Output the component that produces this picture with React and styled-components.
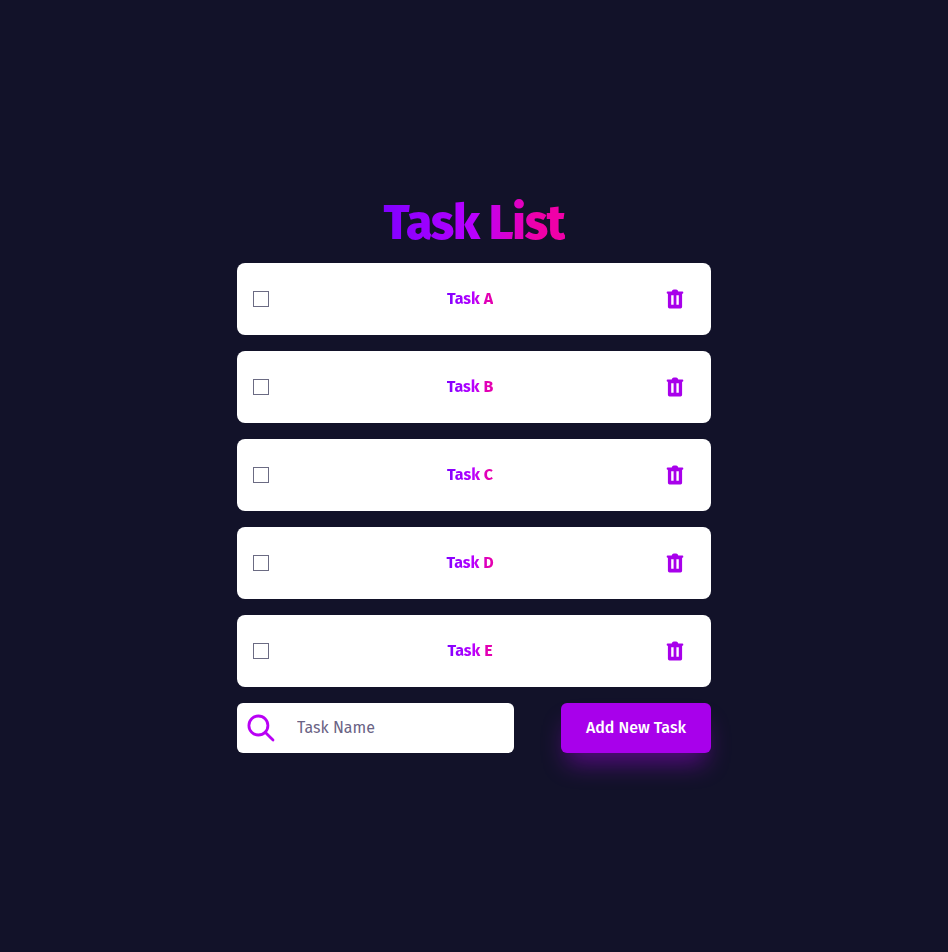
import React, { useState } from 'react';
import styled, { createGlobalStyle, css } from 'styled-components';

const GlobalStyle = createGlobalStyle`
  * { box-sizing: border-box; }
  body {
    margin: 0;
    background: #121229;
    font-family: 'Fira Sans', 'Noto Sans', sans-serif;
  }
`;

const gradientText = css`
  background: linear-gradient(90deg, #8000ff 0%, #b900ff 50%, #f000a8 85%, #f000a8 100%);
  -webkit-background-clip: text;
  background-clip: text;
  color: transparent;
`;

const Page = styled.main`
  min-height: 100vh;
  display: flex;
  justify-content: center;
  align-items: flex-start;
  padding-top: 193px;
`;

const Column = styled.section`
  width: 474px;
  display: flex;
  flex-direction: column;
  align-items: center;
`;

const Title = styled.h1`
  ${gradientText}
  margin: 0 0 10px;
  font-size: 48px;
  font-weight: 800;
  line-height: 60px;
  letter-spacing: -1.2px;
  white-space: nowrap;
`;

const List = styled.ul`
  width: 100%;
  margin: 0 0 16px;
  padding: 0;
  list-style: none;
  display: flex;
  flex-direction: column;
  gap: 16px;
`;

const Row = styled.li`
  height: 72px;
  padding: 0 27px 0 16px;
  border-radius: 8px;
  background: #fff;
  display: flex;
  align-items: center;
  justify-content: space-between;
`;

const Checkbox = styled.input`
  appearance: none;
  width: 16px;
  height: 16px;
  margin: 0;
  border: 1px solid #6b6b83;
  background: ${(p) => (p.checked ? '#a800eb' : '#fff')};
`;

const TaskName = styled.span`
  ${gradientText}
  background-image: linear-gradient(90deg, #8000ff 0%, #b900ff 58%, #e400b0 88%);
  font-size: 16px;
  font-weight: 700;
  line-height: 24px;
  margin-left: 5px;
`;

const IconButton = styled.button`
  display: flex;
  padding: 0;
  border: 0;
  background: none;
  color: #a800eb;
`;

const Form = styled.form`
  width: 100%;
  display: flex;
  justify-content: space-between;
`;

const Field = styled.label`
  width: 277px;
  height: 50px;
  padding-left: 10px;
  border-radius: 6px;
  background: #fff;
  display: flex;
  align-items: center;
  gap: 22px;
`;

const Input = styled.input`
  flex: 1;
  min-width: 0;
  padding: 0;
  border: 0;
  outline: 0;
  background: transparent;
  color: #6a6384;
  font: 400 16px/24px 'Fira Sans', 'Noto Sans', sans-serif;
  &::placeholder { color: #6a6384; opacity: 1; }
`;

const AddButton = styled.button`
  width: 150px;
  height: 50px;
  padding: 0;
  border: 0;
  border-radius: 6px;
  background: #a800eb;
  box-shadow: 0 16px 24px -6px rgba(168, 0, 235, 0.45);
  color: #fff;
  font: 500 16px/24px 'Fira Sans', 'Noto Sans', sans-serif;
  white-space: nowrap;
`;

const TrashIcon = () => (
  <svg width="18" height="20" viewBox="0 0 18 20" fill="currentColor">
    <path
      fillRule="evenodd"
      d="M5.7 2.5C6.1 1.1 6.9.4 7.8.4h2.4c.9 0 1.7.7 2.1 2.1h4.1a.9.9 0 0 1 .9.9v.4a.9.9 0 0 1-.9.9h-.3v13.1a1.6 1.6 0 0 1-1.6 1.6h-11a1.6 1.6 0 0 1-1.6-1.6V4.7h-.3a.9.9 0 0 1-.9-.9v-.4a.9.9 0 0 1 .9-.9ZM5.2 6.3v9.5h2.4V6.3Zm5.2 0v9.5h2.4V6.3Z"
    />
  </svg>
);

const SearchIcon = () => (
  <svg width="28" height="28" viewBox="0 0 28 28" fill="none" stroke="#b900f5" strokeWidth="2.8" strokeLinecap="round">
    <circle cx="11.4" cy="11.5" r="9.5" />
    <path d="M18.2 18.3 26 26" />
  </svg>
);

export default function App() {
  const [tasks, setTasks] = useState(['A', 'B', 'C', 'D', 'E'].map((id) => ({ id, name: `Task ${id}`, done: false })));
  const [name, setName] = useState('');

  const toggle = (id) => setTasks(tasks.map((t) => (t.id === id ? { ...t, done: !t.done } : t)));
  const remove = (id) => setTasks(tasks.filter((t) => t.id !== id));
  const add = (event) => {
    event.preventDefault();
    if (!name.trim()) return;
    setTasks([...tasks, { id: String(Date.now()), name, done: false }]);
    setName('');
  };

  return (
    <Page>
      <GlobalStyle />
      <Column>
        <Title>Task List</Title>
        <List>
          {tasks.map((task) => (
            <Row key={task.id}>
              <Checkbox type="checkbox" checked={task.done} onChange={() => toggle(task.id)} />
              <TaskName>{task.name}</TaskName>
              <IconButton aria-label="Delete task" onClick={() => remove(task.id)}>
                <TrashIcon />
              </IconButton>
            </Row>
          ))}
        </List>
        <Form onSubmit={add}>
          <Field>
            <SearchIcon />
            <Input placeholder="Task Name" value={name} onChange={(e) => setName(e.target.value)} />
          </Field>
          <AddButton type="submit">Add New Task</AddButton>
        </Form>
      </Column>
    </Page>
  );
}
